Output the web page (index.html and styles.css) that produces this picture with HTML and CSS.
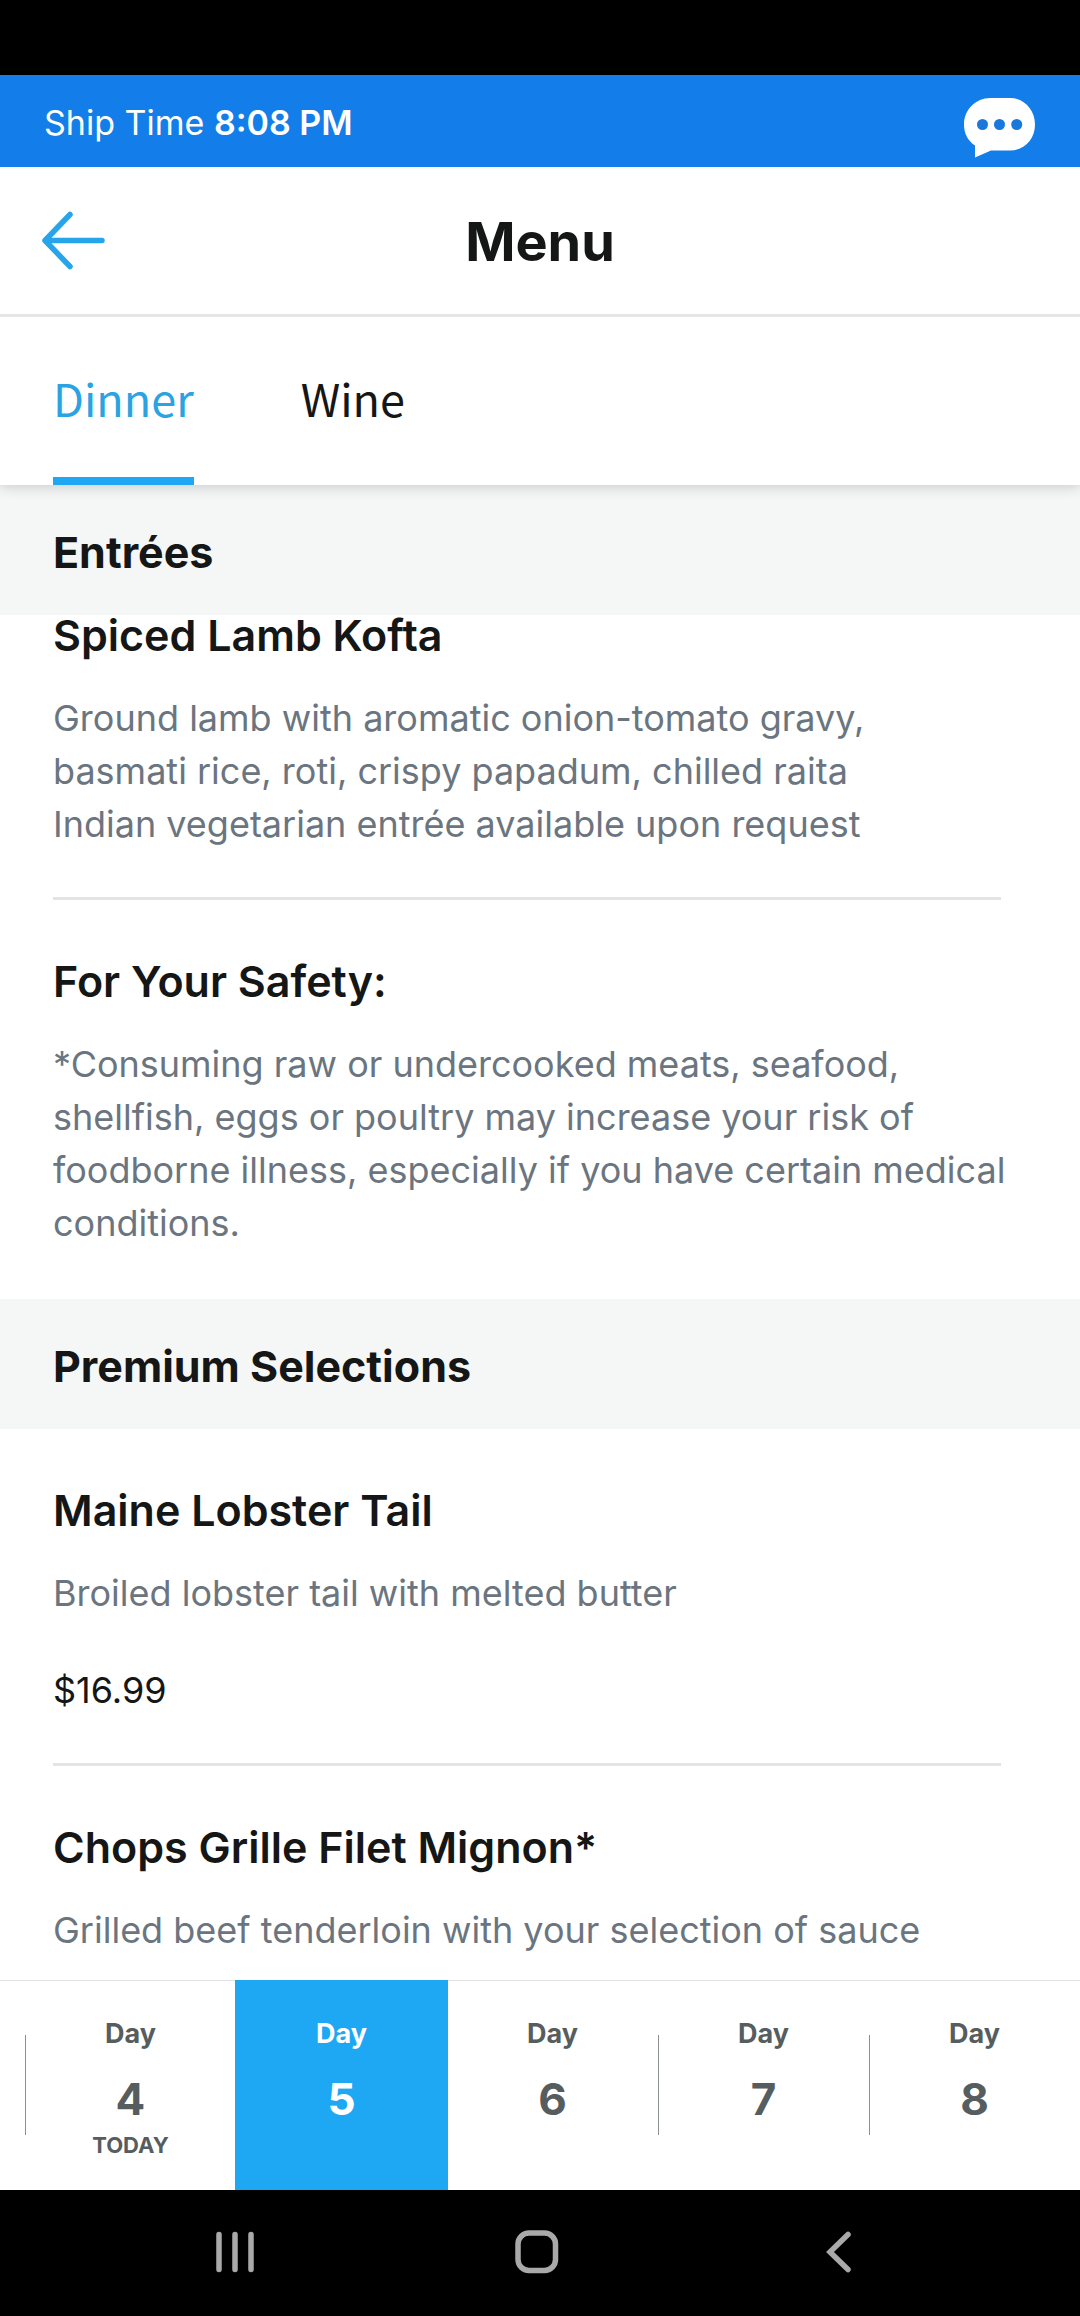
FILE: index.html
```html
<!DOCTYPE html>
<html lang="en">
<head>
  <meta charset="UTF-8">
  <title>Menu</title>
  <meta name="viewport" content="width=device-width, initial-scale=1.0">
  <link rel="stylesheet" href="styles.css">
</head>
<body>

  <div class="status-bar"></div>

  <div class="ship-bar">
    <p class="ship-time">Ship Time <strong>8:08 PM</strong></p>
    <button class="icon-button" type="button" aria-label="Chat">
      <svg width="72" height="60" viewBox="0 0 72 60">
        <path fill="#fff" d="M26 0H46C60 0 71 11.500 71 26.500S60 52.500 46 52.500H27L11 59.500V47.500C4 43 0 35.500 0 26.500C0 11.500 12 0 26 0Z"/>
        <g fill="#1a78dc"><circle cx="18.500" cy="26.500" r="5.500"/><circle cx="35.500" cy="26.500" r="5.500"/><circle cx="52.700" cy="26.500" r="5.500"/></g>
      </svg>
    </button>
  </div>

  <header class="header">
    <button class="icon-button" type="button" aria-label="Back">
      <svg width="64" height="60" viewBox="0 0 64 60" fill="none" stroke="#27a5ea" stroke-width="5.500" stroke-linecap="round" stroke-linejoin="round">
        <path d="M29 3.500L4 29.500L29 55.500M4 29.500H61"/>
      </svg>
    </button>
    <h1 class="header-title">Menu</h1>
  </header>

  <nav class="tabs">
    <a class="tab tab-active" href="#dinner">Dinner</a>
    <a class="tab" href="#wine">Wine</a>
  </nav>

  <main class="menu" id="dinner">
    <h2 class="section-title">Entrées</h2>
    <article class="dish dish-scrolled">
      <h3 class="dish-name">Spiced Lamb Kofta</h3>
      <p class="dish-text">Ground lamb with aromatic onion-tomato gravy,<br>basmati rice, roti, crispy papadum, chilled raita<br>Indian vegetarian entrée available upon request</p>
    </article>
    <article class="dish">
      <h3 class="dish-name">For Your Safety:</h3>
      <p class="dish-text">*Consuming raw or undercooked meats, seafood,<br>shellfish, eggs or poultry may increase your risk of<br>foodborne illness, especially if you have certain medical<br>conditions.</p>
    </article>

    <h2 class="section-title">Premium Selections</h2>
    <article class="dish">
      <h3 class="dish-name">Maine Lobster Tail</h3>
      <p class="dish-text">Broiled lobster tail with melted butter</p>
      <p class="dish-price">$16.99</p>
    </article>
    <article class="dish">
      <h3 class="dish-name">Chops Grille Filet Mignon*</h3>
      <p class="dish-text">Grilled beef tenderloin with your selection of sauce</p>
    </article>
  </main>

  <div class="days">
    <button class="day" type="button"><span class="day-label">Day</span><span class="day-number">4</span><span class="day-note">TODAY</span></button>
    <button class="day day-active" type="button"><span class="day-label">Day</span><span class="day-number">5</span></button>
    <button class="day" type="button"><span class="day-label">Day</span><span class="day-number">6</span></button>
    <button class="day" type="button"><span class="day-label">Day</span><span class="day-number">7</span></button>
    <button class="day" type="button"><span class="day-label">Day</span><span class="day-number">8</span></button>
  </div>

  <div class="system-nav">
    <button class="icon-button" type="button" aria-label="Recent apps">
      <svg width="44" height="44" viewBox="0 0 44 44" stroke="#a9a9a9" stroke-width="5.500" stroke-linecap="round">
        <path d="M6 4.500V39.500M22 4.500V39.500M38 4.500V39.500"/>
      </svg>
    </button>
    <button class="icon-button" type="button" aria-label="Home">
      <svg width="44" height="44" viewBox="0 0 44 44" fill="none" stroke="#a9a9a9" stroke-width="5.500">
        <rect x="3" y="3" width="37.500" height="37.500" rx="11"/>
      </svg>
    </button>
    <button class="icon-button" type="button" aria-label="Back">
      <svg width="44" height="44" viewBox="0 0 44 44" fill="none" stroke="#a9a9a9" stroke-width="5.500" stroke-linecap="round">
        <path d="M31 4.500L13 22L31 39.500"/>
      </svg>
    </button>
  </div>

</body>
</html>
```

FILE: styles.css
```css
* {
  box-sizing: border-box;
}

body {
  margin: 0;
  height: 100vh;
  display: flex;
  flex-direction: column;
  background: #fff;
  color: #151616;
  font-family: Inter, "Open Sans", sans-serif;
}

h1, h2, h3, p {
  margin: 0;
}

button {
  padding: 0;
  border: none;
  background: none;
  font-family: inherit;
  cursor: pointer;
}

.icon-button svg {
  display: block;
}

.status-bar {
  flex: none;
  height: 75px;
  background: #000;
}

.ship-bar {
  flex: none;
  display: flex;
  align-items: center;
  justify-content: space-between;
  height: 92px;
  padding: 14px 44px 0;
  background: #137ee9;
  color: #fff;
}

.ship-time {
  padding-bottom: 10px;
  font-size: 34px;
  line-height: 44px;
}

.ship-time strong {
  font-weight: 600;
}

.header {
  flex: none;
  display: grid;
  grid-template-columns: 1fr auto 1fr;
  align-items: center;
  justify-items: start;
  height: 150px;
  padding: 0 41px;
  background: #fff;
  border-bottom: 3px solid #e6e6e6;
  position: relative;
  z-index: 2;
}

.header-title {
  padding-top: 3px;
  font-size: 54px;
  line-height: 64px;
}

.tabs {
  flex: none;
  display: flex;
  gap: 107px;
  height: 168px;
  padding: 0 53px;
  background: #fff;
  box-shadow: 0 2px 12px rgba(0, 0, 0, 0.18);
  position: relative;
  z-index: 1;
}

.tab {
  display: flex;
  align-items: center;
  border-bottom: 8px solid transparent;
  color: #151616;
  font-family: "Noto Sans CJK SC", sans-serif;
  font-size: 45px;
  text-decoration: none;
}

.tab-active {
  border-bottom-color: #1ea8f4;
  color: #2ba3e2;
}

.menu {
  flex: 1;
  min-height: 0;
  overflow: hidden;
}

.section-title {
  padding: 40px 53px 36px;
  background: #f5f7f7;
  font-size: 43px;
  line-height: 54px;
}

.dish {
  margin: 0 79px 0 53px;
  padding: 61px 0 46px;
  border-bottom: 3px solid #e3e4e5;
}

.dish:has(+ .section-title) {
  border-bottom-color: transparent;
}

/* list is scrolled so the first dish touches the section title */
.dish-scrolled {
  padding-top: 0;
}

.dish-name {
  margin-bottom: 37px;
  font-size: 43px;
  font-weight: 600;
  line-height: 40px;
}

.dish-text,
.dish-price {
  font-size: 36px;
  line-height: 53px;
  white-space: nowrap;
}

.dish-text {
  color: #6b7580;
}

.dish-price {
  margin-top: 44px;
}

.days {
  flex: none;
  display: grid;
  grid-template-columns: repeat(5, 1fr);
  height: 210px;
  padding-left: 25px;
  background: #fff;
  border-top: 1px solid #e0e3e3;
}

.day {
  display: flex;
  flex-direction: column;
  align-items: center;
  padding-top: 37px;
  color: #565d5f;
  font-weight: bold;
  background: linear-gradient(#8a8f91, #8a8f91) left 54px / 1px 100px no-repeat;
}

.day-active {
  margin: -1px -1px 0;
  padding-top: 38px;
  background: #1ea8f4;
  color: #fff;
}

.day-active + .day {
  background: none;
}

.day-label {
  font-size: 27px;
  line-height: 32px;
}

.day-number {
  margin-top: 22px;
  font-size: 44px;
  line-height: 54px;
}

.day-note {
  margin-top: 3px;
  font-size: 22px;
  line-height: 32px;
}

.system-nav {
  flex: none;
  display: flex;
  align-items: flex-start;
  justify-content: center;
  gap: 258px;
  height: 126px;
  padding: 40px 7px 0 0;
  background: #000;
}
```
